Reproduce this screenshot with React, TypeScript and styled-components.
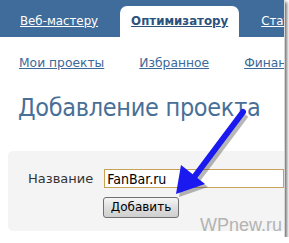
import styled, { createGlobalStyle } from 'styled-components'

const GlobalStyle = createGlobalStyle`
  html, body {
    margin: 0;
    padding: 0;
    background: #ffffff;
  }
  body {
    font-family: "DejaVu Sans", Verdana, sans-serif;
  }
`

const tabs = [
  { id: 1, title: 'Веб-мастеру', active: false },
  { id: 2, title: 'Оптимизатору', active: true },
  { id: 3, title: 'Статьи', active: false },
]

const links = ['Мои проекты', 'Избранное', 'Финансы']

export default function App() {
  return (
    <>
      <GlobalStyle />
      <Frame>
        <Header>
          {tabs.map((tab) => (
            <Tab key={tab.id} $active={tab.active}>
              <TabLink $active={tab.active}>{tab.title}</TabLink>
            </Tab>
          ))}
        </Header>
        <SubNav>
          {links.map((l) => (
            <SubLink key={l}>{l}</SubLink>
          ))}
        </SubNav>
        <Title>Добавление проекта</Title>
        <Panel>
          <FormRow>
            <Label>Название</Label>
            <Input value="FanBar.ru" readOnly />
          </FormRow>
          <ButtonRow>
            <Button>Добавить</Button>
          </ButtonRow>
          <Watermark>WPnew.ru</Watermark>
        </Panel>
        <Arrow width="289" height="243" viewBox="0 0 289 243">
          <g opacity="0.35" transform="translate(3 3)">
            <line x1="243" y1="112" x2="192" y2="180" stroke="#333" strokeWidth="6" />
            <polygon points="176,194 181,165 205,184" fill="#333" />
          </g>
          <line x1="243" y1="112" x2="192" y2="180" stroke="#1a1af0" strokeWidth="6" strokeLinecap="round" />
          <polygon points="176,194 181,165 205,184" fill="#1a1af0" />
        </Arrow>
      </Frame>
    </>
  )
}

const Frame = styled.div`
  position: relative;
  width: 284px;
  height: 237px;
  overflow: hidden;
  background: #ffffff;
  box-shadow: 2px 2px 3px rgba(0, 0, 0, 0.55);
  border-right: 1px solid #d8d8d8;
`

const Header = styled.div`
  display: flex;
  align-items: flex-end;
  gap: 11px;
  height: 37px;
  padding-left: 9px;
  background: #3f6c9a;
  white-space: nowrap;
`

const Tab = styled.div<{ $active: boolean }>`
  display: flex;
  align-items: center;
  height: 31px;
  padding: 0 11px;
  border-radius: 7px 7px 0 0;
  background: ${(p) => (p.$active ? '#ffffff' : 'transparent')};
`

const TabLink = styled.span<{ $active: boolean }>`
  font-size: 11.8px;
  font-weight: ${(p) => (p.$active ? 'bold' : 'normal')};
  color: ${(p) => (p.$active ? '#2b527c' : '#ffffff')};
  text-decoration: underline;
  margin-top: -2px;
`

const SubNav = styled.div`
  display: flex;
  gap: 35px;
  padding: 19px 0 0 19px;
  white-space: nowrap;
`

const SubLink = styled.span`
  font-size: 12.3px;
  color: #3b6a98;
  text-decoration: underline;
`

const Title = styled.h1`
  margin: 22px 0 0 18px;
  font-family: "DejaVu Sans Condensed", "DejaVu Sans", Verdana, sans-serif;
  font-stretch: condensed;
  font-size: 25px;
  font-weight: normal;
  letter-spacing: -0.3px;
  color: #4a6f97;
  white-space: nowrap;
  line-height: 32px;
`

const Panel = styled.div`
  position: relative;
  margin: 27px 0 0 8px;
  height: 80px;
  padding: 18px 0 0 20px;
  box-sizing: border-box;
  background: #f4f4f4;
  border-radius: 5px 0 0 5px;
`

const FormRow = styled.div`
  display: flex;
  align-items: center;
  gap: 11px;
`

const Label = styled.span`
  font-size: 13px;
  color: #333333;
`

const Input = styled.input`
  width: 200px;
  height: 19px;
  box-sizing: border-box;
  padding: 0 2px;
  border: 1px solid #c9a25a;
  background: #ffffff;
  font-family: "DejaVu Sans Condensed", "DejaVu Sans", Verdana, sans-serif;
  font-stretch: condensed;
  font-size: 14px;
  color: #000000;
  outline: none;
`

const ButtonRow = styled.div`
  padding: 8px 0 0 75px;
`

const Button = styled.button`
  width: 76px;
  height: 21px;
  padding: 0;
  border: 1px solid #707070;
  border-radius: 3px;
  background: linear-gradient(#f6f6f6, #dedede 50%, #cfcfcf);
  font-family: "DejaVu Sans", Verdana, sans-serif;
  font-size: 12px;
  color: #000000;
`

const Watermark = styled.span`
  position: absolute;
  right: 2px;
  bottom: -5px;
  font-family: "Liberation Sans", Arial, sans-serif;
  font-size: 18px;
  color: #b3b3b3;
`

const Arrow = styled.svg`
  position: absolute;
  left: 0;
  top: 0;
  pointer-events: none;
`
